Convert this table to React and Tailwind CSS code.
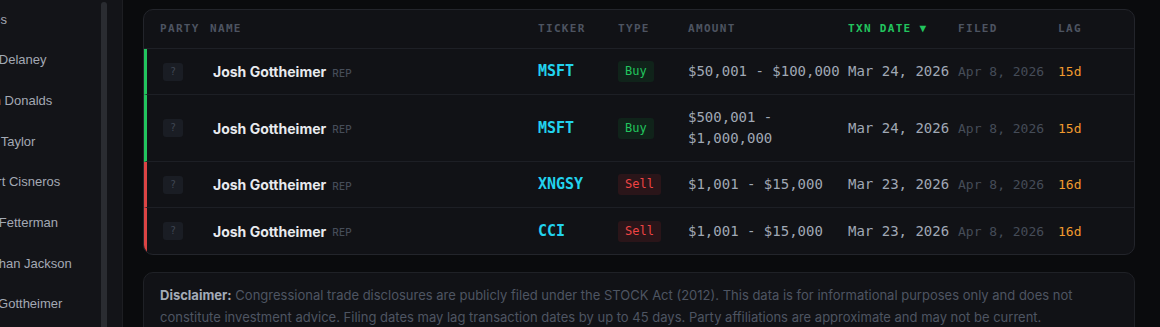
import React from 'react';

const mono = { fontFamily: '"DejaVu Sans Mono", "Liberation Mono", monospace' };

const sidebarNames = [
    'Trades',
    'John Delaney',
    'Byron Donalds',
    'Dave Taylor',
    'Gilbert Cisneros',
    'John Fetterman',
    'Jonathan Jackson',
    'Josh Gottheimer',
];

const trades = [
    { ticker: 'MSFT', type: 'Buy', amount: '$50,001 - $100,000', txn: 'Mar 24, 2026', filed: 'Apr 8, 2026', lag: '15d' },
    { ticker: 'MSFT', type: 'Buy', amount: '$500,001 - $1,000,000', txn: 'Mar 24, 2026', filed: 'Apr 8, 2026', lag: '15d' },
    { ticker: 'XNGSY', type: 'Sell', amount: '$1,001 - $15,000', txn: 'Mar 23, 2026', filed: 'Apr 8, 2026', lag: '16d' },
    { ticker: 'CCI', type: 'Sell', amount: '$1,001 - $15,000', txn: 'Mar 23, 2026', filed: 'Apr 8, 2026', lag: '16d' },
];

const Sidebar = () => (
    <aside className="w-[123px] shrink-0 h-full bg-[#131418] border-r border-[#1d1e22] flex overflow-hidden">
        {/* names are scrolled, first letters are off-screen */}
        <div className="flex-1 overflow-hidden">
            <div className="ml-[-33px] mt-[-1px] flex flex-col">
                {sidebarNames.map((n) => (
                    <div
                        key={n}
                        className="h-[40.7px] shrink-0 flex items-center whitespace-nowrap text-[13px] text-[#a3a9b4]"
                        style={{ fontFamily: '"Liberation Sans", Arial, sans-serif' }}
                    >
                        {n}
                    </div>
                ))}
            </div>
        </div>
        {/* scrollbar */}
        <div className="w-[6px] mt-[2px] rounded-t-[3px] bg-[#2a2c31]"></div>
        <div className="w-[15px]"></div>
    </aside>
);

const TypeBadge = ({ type }) => (
    type === 'Buy' ? (
        <span className="inline-block px-[7px] py-[3px] leading-[15px] text-[12px] font-medium rounded-[3px] bg-[#10231a] text-[#22c55e]" style={mono}>Buy</span>
    ) : (
        <span className="inline-block px-[7px] py-[3px] leading-[15px] text-[12px] font-medium rounded-[3px] bg-[#2a1519] text-[#ef4444]" style={mono}>Sell</span>
    )
);

const TradeRow = ({ t, last }) => (
    <div
        className={`grid grid-cols-[50px_325px_80px_70px_160px_110px_100px_1fr] items-center min-h-[46px] py-[12px] pl-[16px] leading-[21px] border-l-[3px] ${t.type === 'Buy' ? 'border-l-[#22c55e]' : 'border-l-[#dc4444]'} ${last ? '' : 'border-b border-b-[#1d1f25]'}`}
    >
        <div className="flex">
            <span className="inline-flex items-center justify-center w-[20px] h-[18px] rounded-[3px] bg-[#1a1d24] text-[10px] leading-none text-[#3f4652]" style={mono}>?</span>
        </div>
        <div className="flex items-center gap-[6px] h-[21px]">
            <span className="text-[14px] leading-[21px] font-bold text-[#e8eaee]">Josh Gottheimer</span>
            <span className="text-[10px] leading-none mt-[2px] font-medium tracking-wide text-[#464d59]">REP</span>
        </div>
        <div className="text-[15px] leading-[21px] font-bold text-[#22d3ee]" style={mono}>{t.ticker}</div>
        <div className="flex"><TypeBadge type={t.type} /></div>
        <div className="text-[14px] leading-[21px] text-[#a0a8b5] pr-[4px]" style={mono}>{t.amount}</div>
        <div className="text-[14px] leading-[21px] text-[#a0a8b5] whitespace-nowrap" style={mono}>{t.txn}</div>
        <div className="text-[13px] leading-[21px] text-[#454c58] whitespace-nowrap" style={mono}>{t.filed}</div>
        <div className="text-[13px] leading-[21px] font-medium text-[#f29a2e]" style={mono}>{t.lag}</div>
    </div>
);

const headerCls = 'text-[11px] font-bold tracking-[0.12em] text-[#4d5461]';

export default function App() {
    return (
        <div className="w-[1160px] h-[327px] flex overflow-hidden bg-[#0a0b0d]" style={{ fontFamily: 'Inter, "Noto Sans", sans-serif' }}>
            <Sidebar />
            <main className="flex-1 h-full overflow-hidden pl-[20px] pr-[25px] pt-[9px] flex flex-col gap-[17px]">
                {/* Trades table */}
                <div className="shrink-0 rounded-[10px] border border-[#23252b] bg-[#111216] overflow-hidden">
                    <div className="grid grid-cols-[50px_328px_80px_70px_160px_110px_100px_1fr] items-center h-[39px] pl-[16px] border-b border-[#1e2026]" style={mono}>
                        <div className={headerCls}>PARTY</div>
                        <div className={headerCls}>NAME</div>
                        <div className={headerCls}>TICKER</div>
                        <div className={headerCls}>TYPE</div>
                        <div className={headerCls}>AMOUNT</div>
                        <div className="text-[11px] font-bold tracking-[0.12em] text-[#22c55e]">TXN DATE ▼</div>
                        <div className={headerCls}>FILED</div>
                        <div className={headerCls}>LAG</div>
                    </div>
                    {trades.map((t, i) => (
                        <TradeRow key={i} t={t} last={i === trades.length - 1} />
                    ))}
                </div>

                {/* Disclaimer */}
                <div className="shrink-0 rounded-[10px] border border-[#1f2126] bg-[#111216] px-[16px] pt-[11px] pb-[16px] text-[13px] leading-[22px] text-[#4e5562]">
                    <span className="font-bold text-[#a3abb8]">Disclaimer:</span> Congressional trade disclosures are publicly filed under the STOCK Act (2012). This data is for informational purposes only and does not constitute investment advice. Filing dates may lag transaction dates by up to 45 days. Party affiliations are approximate and may not be current.
                </div>
            </main>
        </div>
    );
}
